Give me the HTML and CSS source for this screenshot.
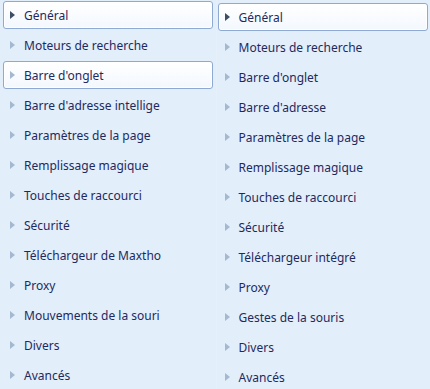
FILE: index.html
```html
<!DOCTYPE html>
<html lang="fr">
<head>
    <meta charset="UTF-8">
    <title>Options</title>
    <link rel="stylesheet" href="styles.css">
</head>
<body>
    <div class="panes">
        <ul class="menu left">
            <li class="item selected"><span class="arrow"></span>Général</li>
            <li class="item"><span class="arrow"></span>Moteurs de recherche</li>
            <li class="item hover"><span class="arrow"></span>Barre d'onglet</li>
            <li class="item"><span class="arrow"></span>Barre d'adresse intellige</li>
            <li class="item"><span class="arrow"></span>Paramètres de la page</li>
            <li class="item"><span class="arrow"></span>Remplissage magique</li>
            <li class="item"><span class="arrow"></span>Touches de raccourci</li>
            <li class="item"><span class="arrow"></span>Sécurité</li>
            <li class="item"><span class="arrow"></span>Téléchargeur de Maxtho</li>
            <li class="item"><span class="arrow"></span>Proxy</li>
            <li class="item"><span class="arrow"></span>Mouvements de la souri</li>
            <li class="item"><span class="arrow"></span>Divers</li>
            <li class="item"><span class="arrow"></span>Avancés</li>
        </ul>
        <ul class="menu right">
            <li class="item selected"><span class="arrow"></span>Général</li>
            <li class="item"><span class="arrow"></span>Moteurs de recherche</li>
            <li class="item"><span class="arrow"></span>Barre d'onglet</li>
            <li class="item"><span class="arrow"></span>Barre d'adresse</li>
            <li class="item"><span class="arrow"></span>Paramètres de la page</li>
            <li class="item"><span class="arrow"></span>Remplissage magique</li>
            <li class="item"><span class="arrow"></span>Touches de raccourci</li>
            <li class="item"><span class="arrow"></span>Sécurité</li>
            <li class="item"><span class="arrow"></span>Téléchargeur intégré</li>
            <li class="item"><span class="arrow"></span>Proxy</li>
            <li class="item"><span class="arrow"></span>Gestes de la souris</li>
            <li class="item"><span class="arrow"></span>Divers</li>
            <li class="item"><span class="arrow"></span>Avancés</li>
        </ul>
    </div>
</body>
</html>
```

FILE: styles.css
```css
body {
    margin: 0;
    padding: 0;
    background-color: #e2eefa;
    font-family: "Noto Sans", "DejaVu Sans", sans-serif;
    font-size: 12px;
    color: #1e2a5e;
    overflow: hidden;
}

.panes {
    display: flex;
    height: 389px;
}

.menu {
    list-style: none;
    margin: 0;
    padding: 0;
    width: 215px;
}

.menu.left {
    padding: 1px 0 0 3px;
    border-right: 1px solid #e6f0fb;
}

.menu.right {
    padding: 3px 0 0 1px;
}

.item {
    display: flex;
    align-items: center;
    box-sizing: border-box;
    width: 210px;
    height: 28px;
    margin-bottom: 2px;
    padding-left: 6px;
    border: 1px solid transparent;
    border-radius: 3px;
    white-space: nowrap;
}

.item.selected,
.item.hover {
    background: linear-gradient(#ffffff, #f3f8fe);
    border-color: #8eaad2;
    box-shadow: inset 0 0 0 1px #ffffff;
}

.arrow {
    width: 0;
    height: 0;
    margin-right: 9px;
    border-top: 4px solid transparent;
    border-bottom: 4px solid transparent;
    border-left: 5px solid #a4b9d0;
}

.item.selected .arrow {
    border-left-color: #3d4d66;
}
```
